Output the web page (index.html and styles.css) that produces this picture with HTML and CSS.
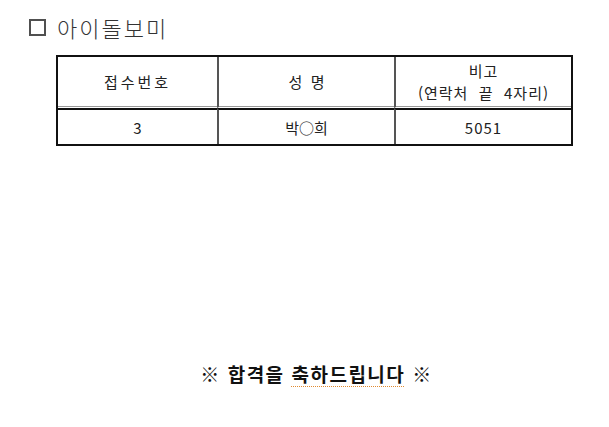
FILE: index.html
```html
<!DOCTYPE html>
<html lang="ko">
<head>
<meta charset="utf-8">
<link rel="stylesheet" href="styles.css">
</head>
<body>
<div class="page">
  <div class="title">
    <span class="box"></span>
    <span class="title-text">아이돌보미</span>
  </div>
  <table class="list">
    <thead>
      <tr>
        <th class="c1"><span class="spaced">접수번호</span></th>
        <th class="c2">성&nbsp;&nbsp;명</th>
        <th class="c3">비고<br>(연락처&nbsp;&nbsp;끝&nbsp;&nbsp;4자리)</th>
      </tr>
    </thead>
    <tbody>
      <tr>
        <td class="c1">3</td>
        <td class="c2">박○희</td>
        <td class="c3">5051</td>
      </tr>
    </tbody>
  </table>
  <p class="congrats">※ 합격을 <span class="squiggle">축하드립니다</span> ※</p>
</div>
</body>
</html>
```
FILE: styles.css
```css
html, body {
  margin: 0;
  padding: 0;
  background: #fff;
}
.page {
  font-family: "Noto Sans CJK KR", "Noto Sans", sans-serif;
  color: #222;
}
.title {
  display: flex;
  align-items: center;
  gap: 11px;
  padding: 13px 0 0 29px;
  height: 28px;
}
.box {
  width: 13px;
  height: 13px;
  border: 2px solid #505050;
  flex: none;
}
.title-text {
  font-size: 22px;
  letter-spacing: 2px;
  color: #333;
  font-weight: 300;
}
.list {
  margin: 14px 0 0 56px;
  width: 517px;
  border-collapse: separate;
  border-spacing: 0;
  border: 2px solid #111;
  font-size: 15px;
  color: #222;
}
.list th, .list td {
  font-weight: 400;
  text-align: center;
  padding: 0;
}
.list th {
  height: 50px;
  line-height: 22px;
  border-bottom: 1px solid #fff;
  box-shadow: inset 0 -1px 0 #999;
}
.list td {
  height: 34px;
  border-top: 2px solid #111;
}
.list .c1 { width: 159px; }
.list .c2 { width: 175px; border-left: 2px solid #555; }
.list .c3 { border-left: 2px solid #555; letter-spacing: 1px; }
.spaced { letter-spacing: 3px; }
.congrats {
  margin: 214px 0 0 0;
  padding-left: 24px;
  text-align: center;
  font-size: 19px;
  font-weight: 700;
  letter-spacing: 1.5px;
  color: #111;
}
.squiggle {
  display: inline-block;
  line-height: 22px;
  padding-bottom: 2px;
  background-image: repeating-linear-gradient(90deg, #e08a30 0 1px, transparent 1px 2px);
  background-size: 100% 1px;
  background-position: left bottom;
  background-repeat: no-repeat;
}
```
